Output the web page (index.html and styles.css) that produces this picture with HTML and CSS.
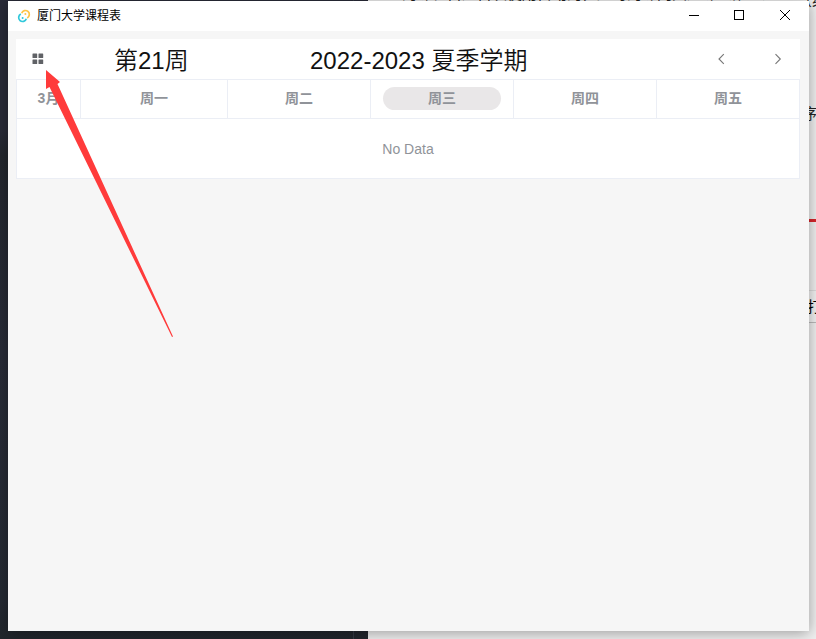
FILE: index.html
```html
<!DOCTYPE html>
<html lang="zh-CN">
<head>
<meta charset="utf-8">
<title>厦门大学课程表</title>
<link rel="stylesheet" href="styles.css">
</head>
<body>
<div class="desktop">
  <div class="backdrop">
    <div class="editor"></div>
    <div class="document">
      <span class="doc-text doc-top">的课程目是首次使用自动的，此时的课门大是课（第一）人</span>
      <span class="doc-text doc-corner">（缘</span>
      <span class="doc-text doc-order">序号</span>
      <span class="doc-rule"></span>
      <span class="doc-button">打</span>
    </div>
  </div>
  <main class="window">
    <header class="titlebar">
      <svg class="logo" viewBox="0 0 14 14" fill="none" stroke-width="1.700">
        <path d="M4.700 4.300A3.900 3.900 0 1 1 10.200 8.900" stroke="#fdc547"/>
        <path d="M9.300 9.700A3.900 3.900 0 1 1 3.800 5.100" stroke="#30c8db"/>
        <circle cx="8.400" cy="5" r="1" fill="#fdc547"/>
        <circle cx="5.600" cy="9" r="1" fill="#30c8db"/>
      </svg>
      <span class="title">厦门大学课程表</span>
      <svg class="controls" viewBox="0 0 138 30" fill="none" stroke="#000">
        <path d="M18 14.5h10" shape-rendering="crispEdges"/>
        <path d="M63.500 9.500h9v9h-9z" shape-rendering="crispEdges"/>
        <path d="M109 9l10 10M119 9l-10 10"/>
      </svg>
    </header>
    <section class="panel">
      <div class="toolbar">
        <svg class="menu" viewBox="0 0 12 12" fill="#606266">
          <rect x=".5" y=".5" width="4.700" height="4.500" rx=".5"/>
          <rect x="6.500" y=".5" width="4.700" height="4.500" rx=".5"/>
          <rect x=".5" y="6.500" width="4.700" height="4.500" rx=".5"/>
          <rect x="6.500" y="6.500" width="4.700" height="4.500" rx=".5"/>
        </svg>
        <span class="week">第21周</span>
        <span class="term">2022-2023 夏季学期</span>
        <svg class="chevron prev" viewBox="0 0 8 12"><path d="M6.800 1.200L2 6l4.800 4.800"/></svg>
        <svg class="chevron next" viewBox="0 0 8 12"><path d="M1.500 1.200L6.300 6l-4.800 4.800"/></svg>
      </div>
      <div class="days">
        <div class="day">3月</div>
        <div class="day">周一</div>
        <div class="day">周二</div>
        <div class="day"><span class="today">周三</span></div>
        <div class="day">周四</div>
        <div class="day">周五</div>
      </div>
      <div class="empty">No Data</div>
    </section>
  </main>
  <svg class="arrow" viewBox="0 0 816 639"><path d="M46 70L60 82L57.500 84L173 336.500L172 337L49.500 87L46 89Z" fill="#ff3b3b"/></svg>
</div>
</body>
</html>
```
FILE: styles.css
```css
* { box-sizing: border-box; }
body {
  margin: 0;
  font-family: "Liberation Sans", "Noto Sans CJK SC", sans-serif;
}
.desktop {
  position: relative;
  width: 816px;
  height: 639px;
  overflow: hidden;
  padding: 1px 0 0 8px;
}
.backdrop {
  position: absolute;
  inset: 0;
  display: flex;
}
.editor {
  width: 368px;
  background: linear-gradient(90deg, transparent 353px, #343a44 353px, #343a44 354px, transparent 354px), linear-gradient(#292b38 0, #292b38 130px, #23272e 155px, #292c38 350px, #252a33 600px, #21262c);
}
.document {
  position: relative;
  flex: 1;
  background: #f0f0f0;
}
.doc-text {
  position: absolute;
  font-size: 15px;
  line-height: 20px;
  white-space: nowrap;
  color: #222;
}
.doc-top { left: 34px; top: -16px; }
.doc-corner { left: 429px; top: -9px; }
.doc-order { left: 434px; top: 104px; }
.doc-rule {
  position: absolute;
  left: 430px;
  right: 0;
  top: 219px;
  height: 3px;
  background: #d8262c;
}
.doc-button {
  position: absolute;
  left: 426px;
  top: 290px;
  width: 40px;
  height: 33px;
  padding-left: 13px;
  font-size: 15px;
  line-height: 32px;
  border-top: 1px solid #ddd;
  border-bottom: 1px solid #bbb;
  background: #f2f2f2;
}
.window {
  position: relative;
  width: 801px;
  height: 630px;
  background: #f6f6f6;
  box-shadow: 0 2px 14px rgba(0, 0, 0, .36);
}
.titlebar {
  display: flex;
  align-items: center;
  height: 30px;
  padding-left: 9px;
  background: #fff;
}
.logo { width: 14px; height: 14px; }
.title {
  margin-left: 6px;
  font-size: 12px;
  line-height: 30px;
  color: #000;
}
.controls {
  width: 138px;
  height: 30px;
  margin-left: auto;
}
.panel {
  width: 784px;
  margin: 8px 0 0 8px;
  background: #fff;
}
.toolbar {
  display: grid;
  grid-template-columns: 98px 196px 398px 57px 35px;
  align-items: center;
  height: 40px;
  color: #111;
  font-size: 24px;
  line-height: 40px;
}
.week, .term {
  height: 40px;
  padding-top: 2px;
  font-weight: 350;
  white-space: nowrap;
}
.menu { width: 12px; height: 12px; margin-left: 16px; }
.chevron {
  width: 8px;
  height: 12px;
  margin-left: 9px;
  fill: none;
  stroke: #777;
  stroke-width: 1.1;
}
.days {
  display: grid;
  grid-template-columns: 64px 147px 143px 143px 143px 143px;
  height: 40px;
  border: 1px solid #ebeef5;
  border-right: 0;
}
.day {
  display: flex;
  align-items: center;
  justify-content: center;
  height: 38px;
  padding-bottom: 2px;
  border-right: 1px solid #ebeef5;
  color: #909399;
  font-size: 14px;
  font-weight: bold;
  line-height: 23px;
}
.today {
  width: 118px;
  height: 23px;
  border-radius: 12px;
  background: #e9e7e8;
  text-align: center;
}
.empty {
  height: 60px;
  border: 1px solid #ebeef5;
  border-top: 0;
  color: #909399;
  font-size: 14px;
  line-height: 60px;
  text-align: center;
}
.arrow {
  position: absolute;
  inset: 0;
  width: 816px;
  height: 639px;
  pointer-events: none;
}
```
